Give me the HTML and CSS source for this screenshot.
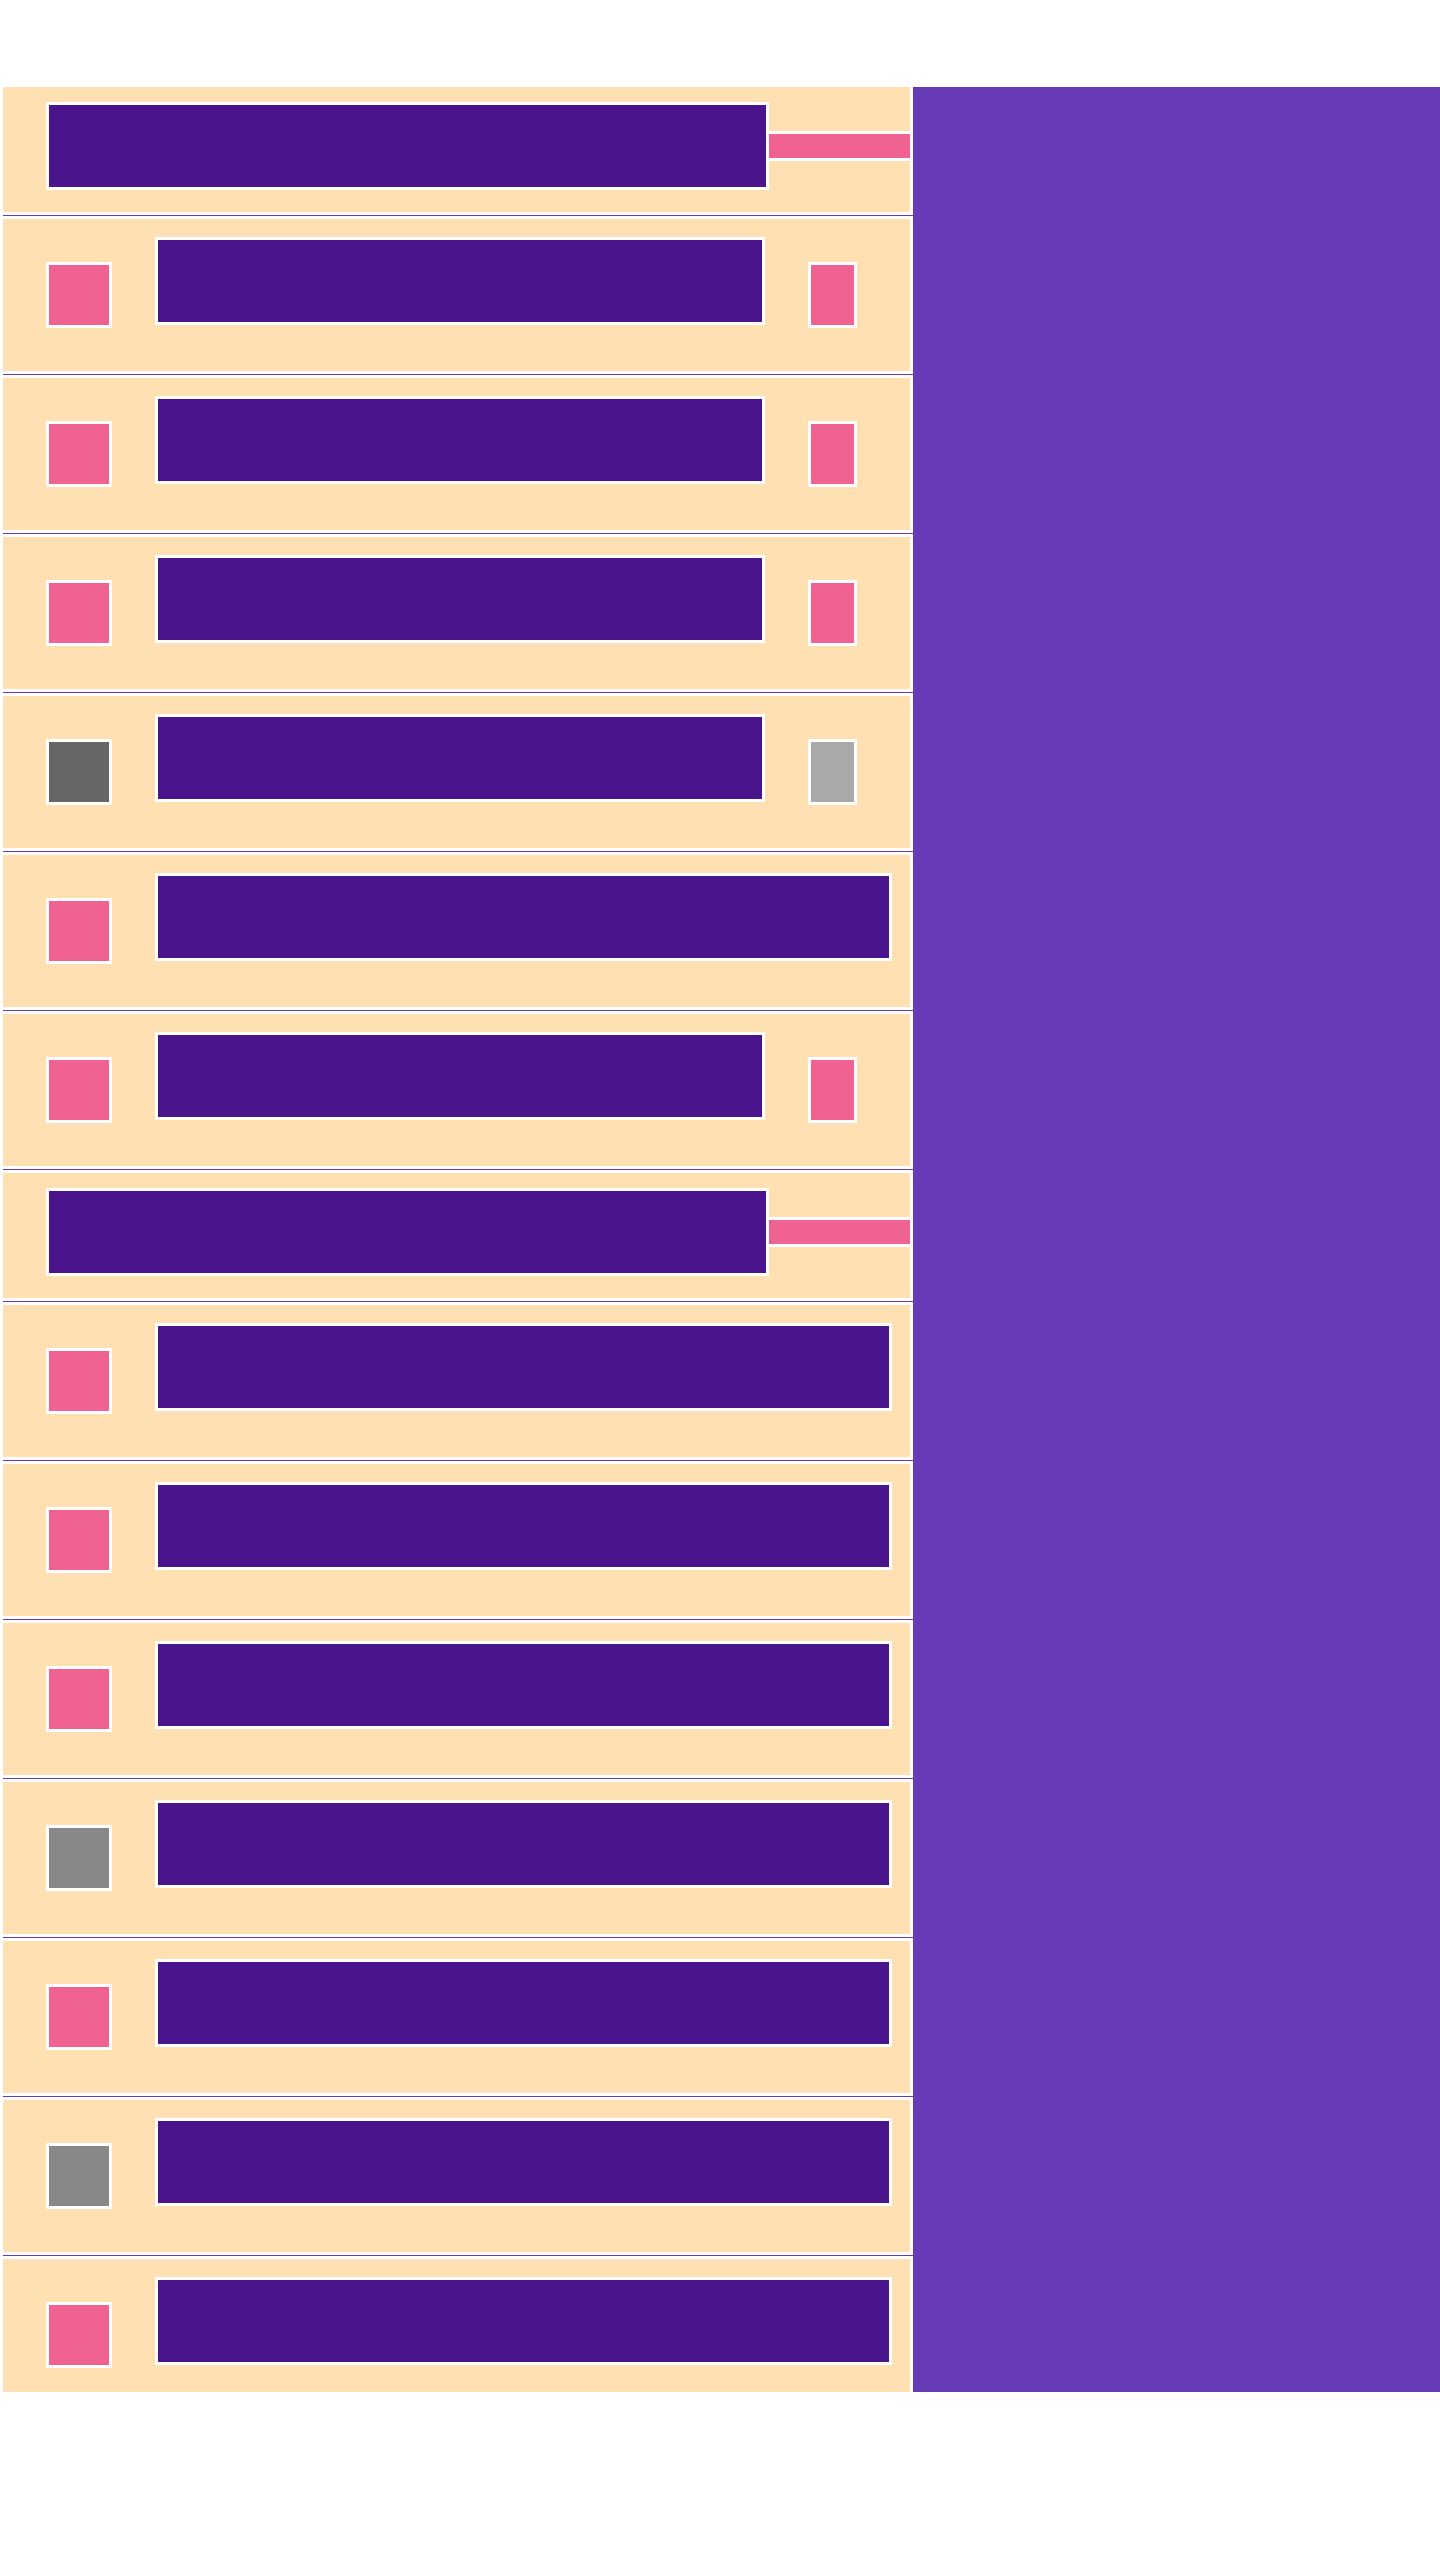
FILE: index.html
```html
<!DOCTYPE html>
<html>
<head>
    <title>Board</title>
    <link rel="stylesheet" href="styles.css">
</head>
<body>
    <div class="board">
        <div class="lanes">
            <div class="lane lane-head">
                <div class="bar"></div>
                <div class="tab"></div>
            </div>
            <div class="lane">
                <div class="chip"></div>
                <div class="bar"></div>
                <div class="flag"></div>
            </div>
            <div class="lane">
                <div class="chip"></div>
                <div class="bar"></div>
                <div class="flag"></div>
            </div>
            <div class="lane">
                <div class="chip"></div>
                <div class="bar"></div>
                <div class="flag"></div>
            </div>
            <div class="lane">
                <div class="chip chip-dark"></div>
                <div class="bar"></div>
                <div class="flag flag-off"></div>
            </div>
            <div class="lane lane-wide">
                <div class="chip"></div>
                <div class="bar"></div>
            </div>
            <div class="lane">
                <div class="chip"></div>
                <div class="bar"></div>
                <div class="flag"></div>
            </div>

            <div class="lane lane-head">
                <div class="bar"></div>
                <div class="tab"></div>
            </div>
            <div class="lane lane-wide">
                <div class="chip"></div>
                <div class="bar"></div>
            </div>
            <div class="lane lane-wide">
                <div class="chip"></div>
                <div class="bar"></div>
            </div>
            <div class="lane lane-wide">
                <div class="chip"></div>
                <div class="bar"></div>
            </div>
            <div class="lane lane-wide">
                <div class="chip chip-muted"></div>
                <div class="bar"></div>
            </div>
            <div class="lane lane-wide">
                <div class="chip"></div>
                <div class="bar"></div>
            </div>
            <div class="lane lane-wide">
                <div class="chip chip-muted"></div>
                <div class="bar"></div>
            </div>
            <div class="lane lane-wide">
                <div class="chip"></div>
                <div class="bar"></div>
            </div>
        </div>
        <div class="side"></div>
    </div>
</body>
</html>
```

FILE: styles.css
```css
body {
    margin: 0;
    background: #fff;
    font-family: "Liberation Sans", Arial, sans-serif;
}
.board {
    display: flex;
    margin: 87px 0 0 3px;
    height: 2305px;
    overflow: hidden;
    background: #673AB7;
}
.lanes {
    width: 910px;
    flex: none;
    display: flex;
    flex-direction: column;
    gap: 1px;
}
.lane {
    flex: none;
    display: flex;
    align-items: center;
    height: 152px;
    padding-left: 43px;
    background: #FFE0B2;
    border: 3px solid #fff;
    border-left: 0;
}
.lane:first-child {
    border-top: 0;
}
.side {
    flex: 1;
}
.chip {
    flex: none;
    width: 60px;
    height: 60px;
    border: 3px solid #fff;
    background: #F06292;
}
.chip-dark {
    background: #666;
}
.chip-muted {
    background: #888;
}
.bar {
    flex: none;
    align-self: flex-start;
    width: 604px;
    height: 82px;
    margin: 18px 43px 0;
    border: 3px solid #fff;
    background: #4A148C;
}
.lane-wide .bar {
    width: 731px;
}
.flag {
    flex: none;
    width: 43px;
    height: 60px;
    border: 3px solid #fff;
    background: #F06292;
}
.flag-off {
    background: #AAA;
}
.lane-head {
    height: 125px;
}
.lane-head .bar {
    width: 717px;
    margin: 15px 0 0;
}
.tab {
    flex: 1;
    align-self: flex-start;
    height: 24px;
    margin-top: 44px;
    border-top: 3px solid #fff;
    border-bottom: 3px solid #fff;
    background: #F06292;
}
```
